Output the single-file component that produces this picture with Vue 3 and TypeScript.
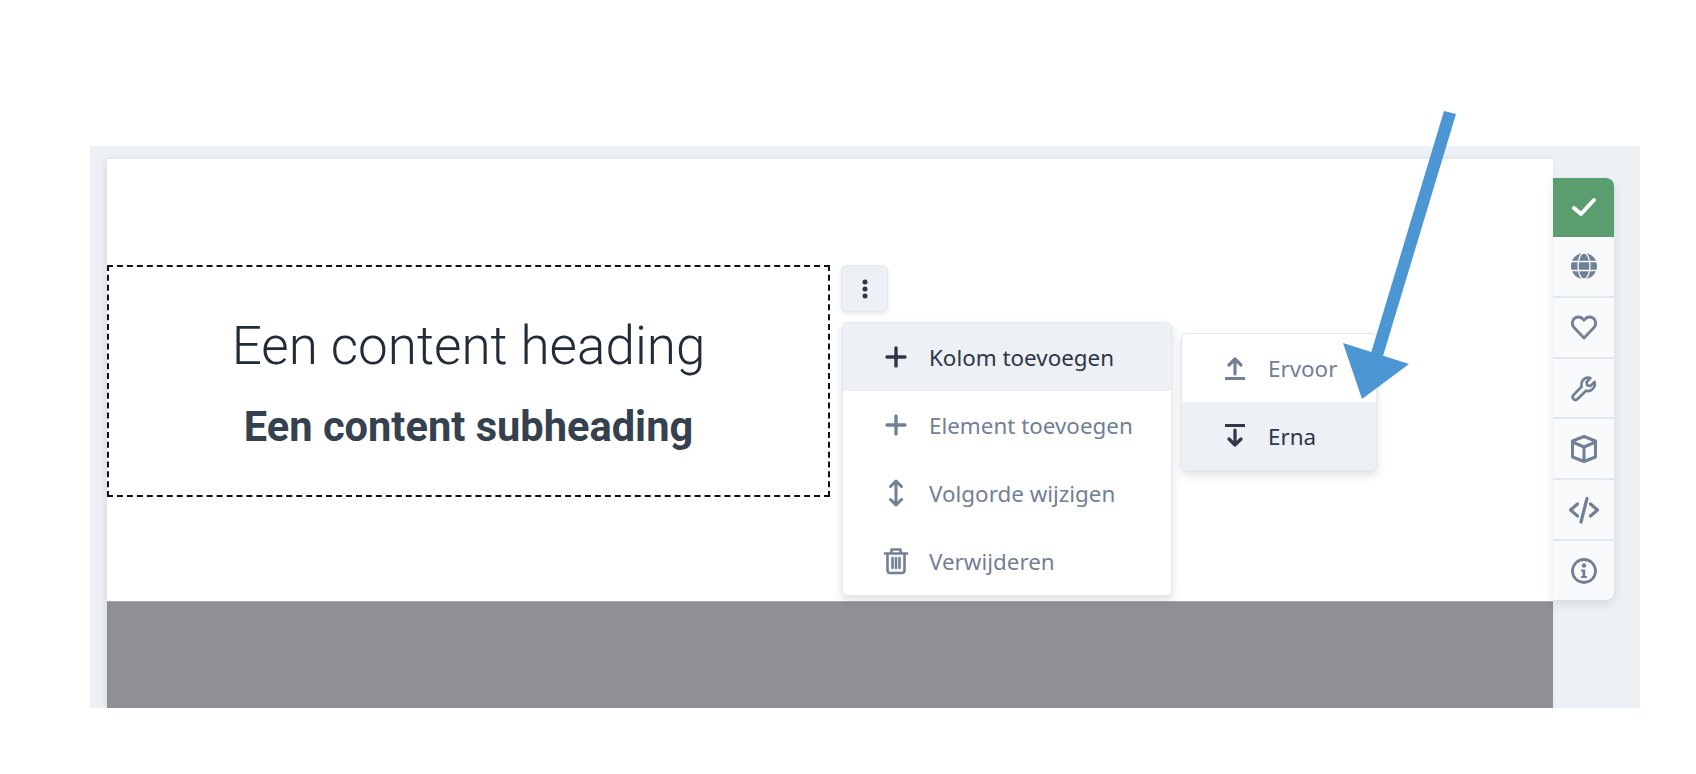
<template>
  <div class="page">
    <div class="stage">
      <div class="canvas">
        <div class="white">
          <div class="row">
            <div class="content-box">
              <h1>Een content heading</h1>
              <h2>Een content subheading</h2>
            </div>
            <div class="actions">
              <button class="dots">
                <svg width="24" height="24" viewBox="0 0 24 24"><circle cx="12" cy="5" r="2.5" /><circle cx="12" cy="12" r="2.5" /><circle cx="12" cy="19" r="2.5" /></svg>
              </button>
              <ul class="menu">
                <li v-for="item in menu" :key="item.label" :class="{ active: item.active }">
                  <svg class="mi" width="28" height="28" viewBox="0 0 28 28" v-html="item.icon"></svg>
                  <span>{{ item.label }}</span>
                </li>
              </ul>
              <ul class="menu sub">
                <li v-for="item in sub" :key="item.label" :class="{ active: item.active }">
                  <svg class="mi" width="28" height="28" viewBox="0 0 28 28" v-html="item.icon"></svg>
                  <span>{{ item.label }}</span>
                </li>
              </ul>
            </div>
          </div>
        </div>
        <div class="grey"></div>
      </div>
      <aside class="toolbar">
        <div v-for="(tool, i) in tools" :key="i" class="tool" :class="{ green: i === 0 }">
          <svg width="30" height="30" viewBox="0 0 30 30" v-html="tool"></svg>
        </div>
      </aside>
    </div>
    <svg class="arrow" width="1696" height="774" viewBox="0 0 1696 774">
      <polygon points="1444,111 1456,114 1383,356 1371,353" />
      <polygon points="1343,343 1409,364 1362,399" />
    </svg>
  </div>
</template>

<script setup lang="ts">
const plus = '<path d="M14 5v18M5 14h18" fill="none" stroke="currentColor" stroke-width="3.4" stroke-linecap="round"/>'

const menu = [
  { label: 'Kolom toevoegen', active: true, icon: plus },
  { label: 'Element toevoegen', active: false, icon: plus },
  {
    label: 'Volgorde wijzigen',
    active: false,
    icon: '<path d="M14 2v24M8.500 7.500L14 2l5.500 5.500M8.500 20.500L14 26l5.500-5.500" fill="none" stroke="currentColor" stroke-width="3" stroke-linecap="round" stroke-linejoin="round"/>'
  },
  {
    label: 'Verwijderen',
    active: false,
    icon: '<g fill="none" stroke="currentColor" stroke-width="2.600" stroke-linejoin="round" stroke-linecap="round"><path d="M3 6.500h22M9.500 6.500V2.500h9v4M5.500 6.500v17a2.500 2.500 0 0 0 2.500 2.500h12a2.500 2.500 0 0 0 2.500-2.500v-17M10.500 11v10M14 11v10M17.500 11v10"/></g>'
  }
]

const sub = [
  {
    label: 'Ervoor',
    active: false,
    icon: '<path d="M14 20V5M8 11l6-6 6 6" fill="none" stroke="currentColor" stroke-width="3.200" stroke-linecap="round" stroke-linejoin="round"/><path d="M4 24.500h20" stroke="currentColor" stroke-width="3"/>'
  },
  {
    label: 'Erna',
    active: true,
    icon: '<path d="M14 8v15M8 17l6 6 6-6" fill="none" stroke="currentColor" stroke-width="3.200" stroke-linecap="round" stroke-linejoin="round"/><path d="M4 3.500h20" stroke="currentColor" stroke-width="3"/>'
  }
]

const tools = [
  '<path d="M5 16l7 6L25 8" fill="none" stroke="#fff" stroke-width="4" stroke-linecap="round" stroke-linejoin="round"/>',
  '<circle cx="15" cy="15" r="13" fill="currentColor"/><g fill="none" stroke="#f9fafc" stroke-width="1.300"><ellipse cx="15" cy="15" rx="6" ry="13"/><path d="M2 10.500h26M2 19.500h26"/></g>',
  '<path d="M15 26L5 15.500C1.500 11.500 4 5 9.500 5c2.500 0 4.200 1.300 5.500 3.200C16.300 6.300 18 5 20.500 5 26 5 28.500 11.500 25 15.500z" fill="none" stroke="currentColor" stroke-width="2.800" stroke-linejoin="round"/>',
  '<path d="M19 4.500a7 7 0 0 1 2.500.5l-4 4 .7 3.300 3.300.7 4-4A7 7 0 0 1 17 17.800L8.500 26a2.800 2.800 0 0 1-4-4l8.200-8.500A7 7 0 0 1 19 4.500z" fill="none" stroke="currentColor" stroke-width="2.600" stroke-linejoin="round"/>',
  '<g fill="none" stroke="currentColor" stroke-width="3" stroke-linejoin="round"><path d="M15 2.500l11.500 4.500v16L15 27.500 3.500 23V7z"/><path d="M3.500 8L15 13l11.500-5M15 13v14"/></g>',
  '<g fill="none" stroke="currentColor" stroke-width="3.200" stroke-linecap="round" stroke-linejoin="round"><path d="M8.500 9L1.500 15l7 6M21.500 9l7 6-7 6"/><path d="M18 3.500L12 27"/></g>',
  '<circle cx="15" cy="15" r="11.500" fill="none" stroke="currentColor" stroke-width="2.800"/><circle cx="15" cy="9.500" r="2.200" fill="currentColor"/><path d="M12 13.500h4.200V20H18v2h-6v-2h1.500v-4.500H12z" fill="currentColor"/>'
]
</script>

<style>
html, body { margin: 0; background: #fff; overflow: hidden; }
</style>

<style scoped>
.page { position: relative; height: 774px; padding: 146px 56px 0 90px; box-sizing: border-box; font-family: "Noto Sans", sans-serif; }
.stage { display: flex; height: 562px; background: #edf0f5; padding: 13px 0 0 17px; box-sizing: border-box; overflow: hidden; }
.canvas { width: 1446px; display: flex; flex-direction: column; box-shadow: -2px 0 6px rgba(45, 55, 72, 0.1); }
.white { height: 442px; background: #fff; padding-top: 106px; box-sizing: border-box; flex-shrink: 0; }
.grey { flex: 1; background: #8f9094; border-top: 1px solid #a5a6a9; }
.row { display: flex; }
.content-box { width: 723px; height: 232px; box-sizing: border-box; border: 2px dashed #111; text-align: center; font-family: Roboto, sans-serif; padding-top: 46px; }
h1 { margin: 0; font-size: 53px; line-height: 66px; font-weight: 300; color: #222c38; }
h2 { margin: 23px 0 0; font-size: 41.6px; line-height: 50px; font-weight: 700; color: #364150; }
.actions { position: relative; margin-left: 11px; }
.dots { width: 47px; height: 47px; padding: 0; display: flex; align-items: center; justify-content: center; background: #edf0f5; border: 1px solid #e2e8f0; border-radius: 6px; box-shadow: 0 2px 4px rgba(45, 55, 72, 0.12); }
.dots svg { fill: #2d3748; }
.menu { position: absolute; left: 1px; top: 57px; width: 330px; margin: 0; padding: 0; list-style: none; background: #fff; border: 1px solid #e2e8f0; border-radius: 5px; box-sizing: border-box; box-shadow: 0 4px 8px rgba(45, 55, 72, 0.16); overflow: hidden; }
.menu.sub { left: 340px; top: 68px; width: 196px; }
.menu li { display: flex; align-items: center; height: 68px; padding-left: 39px; font-size: 22.4px; color: #718096; }
.menu li.active { background: #edf0f5; color: #2d3748; }
.mi { margin-right: 19px; flex-shrink: 0; }
.toolbar { width: 61px; height: 422px; margin-top: 19px; background: #f9fafc; border-radius: 0 8px 8px 0; box-shadow: 0 4px 10px rgba(45, 55, 72, 0.12); display: flex; flex-direction: column; color: #718096; }
.tool { flex: 1; display: flex; align-items: center; justify-content: center; border-bottom: 2px solid #e2e8f0; }
.tool:last-child { border-bottom: 0; }
.tool.green { background: #5a9e6f; border-bottom: 0; border-radius: 0 8px 0 0; }
.arrow { position: absolute; left: 0; top: 0; fill: #4c96d4; pointer-events: none; }
</style>
